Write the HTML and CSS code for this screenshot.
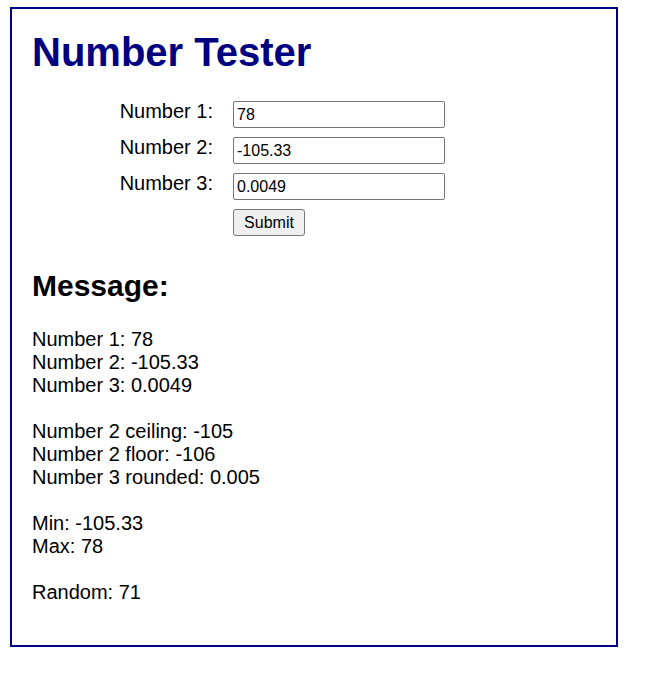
FILE: index.html
```html
<!DOCTYPE html>
<html lang="en">
<head>
<meta charset="utf-8">
<title>Number Tester</title>
<link rel="stylesheet" href="styles.css">
</head>
<body>
<main class="panel">
  <h1 class="title">Number Tester</h1>
  <form class="form">
    <label class="form-label" for="num1">Number 1:</label>
    <input class="form-input" type="text" id="num1" value="78">
    <label class="form-label" for="num2">Number 2:</label>
    <input class="form-input" type="text" id="num2" value="-105.33">
    <label class="form-label" for="num3">Number 3:</label>
    <input class="form-input" type="text" id="num3" value="0.0049">
    <span class="form-spacer"></span>
    <button class="form-button" type="button">Submit</button>
  </form>
  <h2 class="subtitle">Message:</h2>
  <p class="message">Number 1: 78<br>Number 2: -105.33<br>Number 3: 0.0049<br><br>Number 2 ceiling: -105<br>Number 2 floor: -106<br>Number 3 rounded: 0.005<br><br>Min: -105.33<br>Max: 78<br><br>Random: 71</p>
</main>
</body>
</html>
```
FILE: styles.css
```css
html, body {
  margin: 0;
  padding: 0;
  background: #ffffff;
}

body {
  font-family: "Liberation Sans", Arial, sans-serif;
  font-size: 20px;
  color: #000000;
}

.panel {
  box-sizing: border-box;
  width: 608px;
  margin: 7px 0 0 10px;
  border: 2px solid #000080;
  padding: 20px 20px 41px 20px;
}

.title {
  margin: 0 0 26px 0;
  font-size: 40px;
  font-weight: bold;
  line-height: 46px;
  color: #000080;
}

.form {
  display: grid;
  grid-template-columns: 181px 212px;
  column-gap: 20px;
  row-gap: 9px;
  align-items: start;
}

.form-label {
  text-align: right;
  line-height: 23px;
  margin-top: -1px;
}

.form-input {
  box-sizing: border-box;
  width: 212px;
  height: 27px;
  margin: 0;
  padding: 0 3px;
  border: 1px solid #767676;
  border-radius: 2px;
  font-family: "Liberation Sans", Arial, sans-serif;
  font-size: 16px;
  color: #000000;
  background: #ffffff;
}

.form-button {
  box-sizing: border-box;
  width: 72px;
  height: 27px;
  margin: 0;
  padding: 0;
  border: 1px solid #767676;
  border-radius: 3px;
  background: #efefef;
  font-family: "Liberation Sans", Arial, sans-serif;
  font-size: 16px;
  color: #000000;
}

.subtitle {
  margin: 33px 0 24px 0;
  font-size: 30px;
  font-weight: bold;
  line-height: 34.5px;
}

.message {
  margin: 0;
  line-height: 23px;
}
```
